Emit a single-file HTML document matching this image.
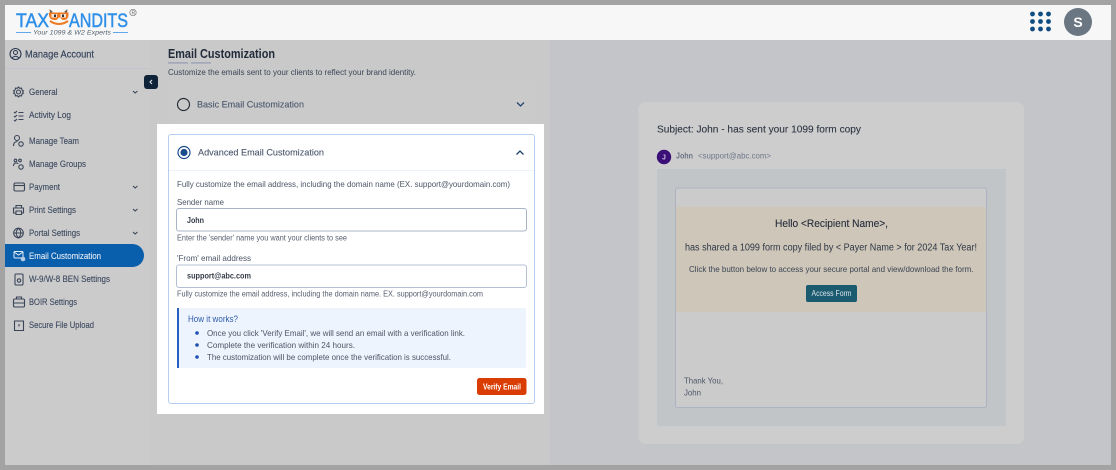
<!DOCTYPE html>
<html lang="en"><head><meta charset="utf-8"><title>Email Customization</title>
<style>
html,body{margin:0;padding:0;width:1116px;height:470px;overflow:hidden;background:#a3a3a3}
svg{display:block;filter:blur(0.35px)}
text{font-family:"Liberation Sans",sans-serif;white-space:pre}
.s{font-size:9px;fill:#3d4a5f;stroke:#3d4a5f;stroke-width:.12}
.g{font-size:7.8px;fill:#565f70}
.d{font-size:8.400px;fill:#4d5666}
.ic{fill:none;stroke:#3a4658;stroke-width:1.100}
</style></head><body>
<svg width="1116" height="470" viewBox="0 0 1116 470" xmlns="http://www.w3.org/2000/svg">
<rect width="1116" height="470" fill="#a3a3a3"/>
<rect x="5" y="5" width="1106" height="35" fill="#f7f7f7"/>
<rect x="5" y="40" width="145" height="425" fill="#cbcbcb"/>
<rect x="150" y="40" width="400" height="425" fill="#c9c9c9"/>
<rect x="550" y="40" width="561" height="425" fill="#c4c5c9"/>

<!-- logo -->
<text x="16" y="27" font-size="19" fill="#2f8fe8" stroke="#2f8fe8" stroke-width=".5" textLength="33" lengthAdjust="spacingAndGlyphs">TAX</text>
<text x="69" y="27" font-size="19" fill="#2f8fe8" stroke="#2f8fe8" stroke-width=".5" textLength="59" lengthAdjust="spacingAndGlyphs">ANDITS</text>
<path d="M50 13l-.5-4 3.500 3zM67 13l.5-4-3.500 3z" fill="#6d6258"/>
<path d="M49 12.500h19.500v2.500c0 3-2 5-4.500 5h-1.500l-2.500-2.500h-1l-2.500 2.500h-2c-3 0-5.500-2-5.500-5z" fill="#ee7a22"/>
<rect x="51.500" y="14" width="5.500" height="3.500" fill="#f6e8dc"/><rect x="60.500" y="14" width="5.500" height="3.500" fill="#f6e8dc"/>
<rect x="54" y="14.500" width="2" height="2.500" fill="#333"/><rect x="62" y="14.500" width="2" height="2.500" fill="#333"/>
<path d="M50 21q9 6 18 0" fill="none" stroke="#ee7a22" stroke-width="2"/>
<circle cx="133" cy="12.500" r="3.200" fill="none" stroke="#777" stroke-width=".7"/>
<text x="131.500" y="14.500" font-size="5" fill="#666">R</text>
<path d="M16 32.500h15M113 32.500h15" stroke="#2f8fe8" stroke-width=".8"/>
<text x="33" y="34.500" font-size="6.500" font-style="italic" fill="#56606f" textLength="78" lengthAdjust="spacingAndGlyphs">Your 1099 &amp; W2 Experts</text>

<!-- top right -->
<g fill="#0f4c81">
<circle cx="1032.500" cy="14" r="2.400"/><circle cx="1040.500" cy="14" r="2.400"/><circle cx="1048.500" cy="14" r="2.400"/>
<circle cx="1032.500" cy="21.500" r="2.400"/><circle cx="1040.500" cy="21.500" r="2.400"/><circle cx="1048.500" cy="21.500" r="2.400"/>
<circle cx="1032.500" cy="29" r="2.400"/><circle cx="1040.500" cy="29" r="2.400"/><circle cx="1048.500" cy="29" r="2.400"/>
</g>
<circle cx="1078" cy="22" r="14" fill="#6b7683"/>
<text x="1078" y="27" font-size="14" font-weight="bold" fill="#fff" text-anchor="middle">S</text>

<!-- sidebar -->
<circle cx="15.500" cy="54" r="5.500" fill="none" stroke="#2b3a52" stroke-width="1.100"/>
<circle cx="15.500" cy="52.500" r="2" fill="none" stroke="#2b3a52"/>
<path d="M12 58q3.500-3.500 7 0" fill="none" stroke="#2b3a52"/>
<text x="25" y="57.500" font-size="10" fill="#33415a" stroke="#33415a" stroke-width=".15" textLength="69" lengthAdjust="spacingAndGlyphs">Manage Account</text>
<rect x="5" y="68" width="145" height="1" fill="#c1c5cc"/>

<path d="M5 244H132.500a11.500 11.500 0 0 1 0 23H5z" fill="#0a5fad"/>

<text class="s" x="29" y="95" textLength="28.500" lengthAdjust="spacingAndGlyphs">General</text>
<text class="s" x="29" y="118" textLength="42" lengthAdjust="spacingAndGlyphs">Activity Log</text>
<text class="s" x="29" y="144" textLength="50" lengthAdjust="spacingAndGlyphs">Manage Team</text>
<text class="s" x="29" y="167" textLength="57" lengthAdjust="spacingAndGlyphs">Manage Groups</text>
<text class="s" x="29" y="190" textLength="31" lengthAdjust="spacingAndGlyphs">Payment</text>
<text class="s" x="29" y="213" textLength="47" lengthAdjust="spacingAndGlyphs">Print Settings</text>
<text class="s" x="29" y="236" textLength="51" lengthAdjust="spacingAndGlyphs">Portal Settings</text>
<text x="29" y="259" font-size="9" fill="#e3ebf5" stroke="#e3ebf5" stroke-width=".12" textLength="72" lengthAdjust="spacingAndGlyphs">Email Customization</text>
<text class="s" x="29" y="282" textLength="81" lengthAdjust="spacingAndGlyphs">W-9/W-8 BEN Settings</text>
<text class="s" x="29" y="305" textLength="48" lengthAdjust="spacingAndGlyphs">BOIR Settings</text>
<text class="s" x="29" y="328" textLength="65" lengthAdjust="spacingAndGlyphs">Secure File Upload</text>

<!-- sidebar icons -->
<g class="ic">
<circle cx="18.500" cy="92" r="2"/><path d="M18.500 87l1.200 1.300 1.800-.2.400 1.800 1.500 1-.8 1.100.8 1.200-1.500 1-.4 1.700-1.800-.2-1.200 1.300-1.200-1.300-1.800.2-.4-1.700-1.500-1 .8-1.200-.8-1.100 1.500-1 .4-1.800 1.800.2z"/>
<path d="M14 112l1 1 2-2M14 116l1 1 2-2M14 120l1 1 2-2M18.500 112.500h5M18.500 116h5M18.500 119.500h5"/>
<circle cx="17" cy="138" r="2.500"/><path d="M13.500 146c0-3 1.500-4.500 4-4.500"/><circle cx="21" cy="144" r="2.200"/>
<circle cx="15.500" cy="160.500" r="1.300"/><circle cx="20" cy="160.500" r="1.300"/><path d="M13.500 166c0-2 1-3 2.500-3s2 .5 2 1"/><circle cx="21" cy="167" r="2.200"/>
<rect x="14" y="183" width="10.500" height="8" rx="1.500"/><path d="M14 185.500h10.500"/>
<path d="M16 208v-2.500h5.500v2.500M16 213h-2.500v-5h10v5h-2M16 211h5.500v3.500h-5.500z"/>
<circle cx="18.500" cy="233" r="4.800"/><path d="M13.700 233h9.600M18.500 228.200c-3 3-3 6.600 0 9.600c3-3 3-6.600 0-9.600"/>
<rect x="15" y="274" width="8" height="11" rx="1"/><circle cx="19" cy="280.500" r="1.700"/>
<rect x="13.500" y="299" width="11" height="8" rx="1.200"/><path d="M16.500 299v-2h5v2M13.500 303h11"/>
<path d="M14.500 321h9v9.500h-9zM19 324v2.500"/>
</g>
<g fill="none" stroke="#e3ebf5" stroke-width="1"><rect x="14" y="251.500" width="9" height="6.500" rx="1"/><path d="M14 252l4.500 3 4.500-3"/></g>
<circle cx="23" cy="259" r="2.300" fill="#b9cde4"/>
<g fill="none" stroke="#3a4658" stroke-width="1.100">
<path d="M133 91l2.200 2 2.200-2M133 186l2.200 2 2.200-2M133 209l2.200 2 2.200-2M133 232l2.200 2 2.200-2"/>
</g>

<!-- main header -->
<text x="168" y="58" font-size="12.500" font-weight="bold" fill="#222b39" textLength="107" lengthAdjust="spacingAndGlyphs">Email Customization</text>
<rect x="168" y="62" width="20" height="1.700" fill="#a2a9b9"/><rect x="191" y="62" width="20" height="1.700" fill="#a2a9b9"/>
<text x="168" y="75" font-size="8.400" fill="#3b4555" textLength="248" lengthAdjust="spacingAndGlyphs">Customize the emails sent to your clients to reflect your brand identity.</text>

<!-- basic panel -->
<rect x="168" y="87" width="367" height="36" rx="2" fill="#cacaca"/>
<circle cx="183.500" cy="104.500" r="6" fill="none" stroke="#2a2f38" stroke-width="1.200"/>
<text x="197" y="107.500" font-size="9.500" fill="#4a566b" stroke="#4a566b" stroke-width=".1" textLength="107" lengthAdjust="spacingAndGlyphs">Basic Email Customization</text>
<path d="M517 102.500l3.500 3.500 3.500-3.500" fill="none" stroke="#25456f" stroke-width="1.300"/>

<!-- white zone -->
<rect x="157" y="124" width="387" height="290" fill="#fff"/>
<rect x="168.500" y="134.500" width="366" height="269" rx="2.500" fill="#fff" stroke="#b5cef0"/>
<rect x="169" y="170" width="365" height="1" fill="#edf3fb"/>
<circle cx="184" cy="152.500" r="6" fill="none" stroke="#1a4c8c" stroke-width="1.200"/>
<circle cx="184" cy="152.500" r="3.600" fill="#1a4c8c"/>
<text x="198" y="155.500" font-size="9.500" fill="#4a566b" stroke="#4a566b" stroke-width=".1" textLength="126" lengthAdjust="spacingAndGlyphs">Advanced Email Customization</text>
<path d="M516.500 154.500l3.500-3.500 3.500 3.500" fill="none" stroke="#1f3f6d" stroke-width="1.300"/>

<text class="d" x="177" y="187" textLength="333" lengthAdjust="spacingAndGlyphs">Fully customize the email address, including the domain name (EX. support@yourdomain.com)</text>
<text class="d" x="177" y="205" textLength="47" lengthAdjust="spacingAndGlyphs">Sender name</text>
<rect x="176.500" y="208.500" width="350" height="22.500" rx="2.500" fill="#fff" stroke="#a9b3c6" stroke-width="1"/>
<text x="187" y="223" font-size="8.400" font-weight="bold" fill="#333a47" textLength="17" lengthAdjust="spacingAndGlyphs">John</text>
<text class="g" x="177" y="240.500" textLength="170" lengthAdjust="spacingAndGlyphs">Enter the 'sender' name you want your clients to see</text>
<text class="d" x="177" y="261" textLength="74" lengthAdjust="spacingAndGlyphs">'From' email address</text>
<rect x="176.500" y="265" width="350" height="22.500" rx="2.500" fill="#fff" stroke="#b4bfd4" stroke-width="1"/>
<text x="187" y="278.500" font-size="8.400" font-weight="bold" fill="#333a47" textLength="64" lengthAdjust="spacingAndGlyphs">support@abc.com</text>
<text class="g" x="177" y="296.500" textLength="306" lengthAdjust="spacingAndGlyphs">Fully customize the email address, including the domain name. EX. support@yourdomain.com</text>

<rect x="177" y="308" width="349" height="60" rx="2" fill="#eef4fd"/>
<rect x="177" y="308" width="2" height="60" fill="#2a5fc0"/>
<text x="188" y="322" font-size="8.800" fill="#2f5cab" textLength="50" lengthAdjust="spacingAndGlyphs">How it works?</text>
<circle cx="197" cy="333" r="1.800" fill="#1f4fae"/><circle cx="197" cy="345" r="1.800" fill="#1f4fae"/><circle cx="197" cy="357" r="1.800" fill="#1f4fae"/>
<text class="d" x="207" y="336" textLength="258" lengthAdjust="spacingAndGlyphs">Once you click 'Verify Email', we will send an email with a verification link.</text>
<text class="d" x="207" y="348" textLength="148" lengthAdjust="spacingAndGlyphs">Complete the verification within 24 hours.</text>
<text class="d" x="207" y="360" textLength="244" lengthAdjust="spacingAndGlyphs">The customization will be complete once the verification is successful.</text>

<rect x="477" y="378" width="49.500" height="17" rx="2.500" fill="#d93d04"/>
<text x="483" y="389.500" font-size="8.400" font-weight="bold" fill="#fff" textLength="38" lengthAdjust="spacingAndGlyphs">Verify Email</text>

<!-- collapse -->
<rect x="144" y="75" width="14" height="14" rx="3" fill="#0f2438"/>
<path d="M152 80l-2 2 2 2" fill="none" stroke="#dfe6ee" stroke-width="1.100"/>

<!-- right preview -->
<rect x="638.500" y="102" width="385.500" height="342" rx="7" fill="#cdcdcd"/>
<text x="657" y="132.500" font-size="10.500" fill="#2d3542" stroke="#2d3542" stroke-width=".1" textLength="204" lengthAdjust="spacingAndGlyphs">Subject: John - has sent your 1099 form copy</text>
<circle cx="664" cy="157" r="7.200" fill="#3a0f78"/>
<text x="664" y="159.500" font-size="7" font-weight="bold" fill="#cbbfe0" text-anchor="middle">J</text>
<text x="676" y="158.500" font-size="8" font-weight="bold" fill="#6a7382" textLength="17" lengthAdjust="spacingAndGlyphs">John</text>
<text x="698" y="158.500" font-size="8" fill="#6f7889" textLength="73" lengthAdjust="spacingAndGlyphs">&lt;support@abc.com&gt;</text>

<rect x="657" y="169" width="349" height="257" fill="#c1c5c8"/>
<rect x="675.500" y="188" width="311" height="219.500" rx="2" fill="#cbcbcb" stroke="#aeb3c2"/>
<rect x="676" y="207" width="310" height="105" fill="#cdc6b9"/>
<text x="775" y="227" font-size="11" fill="#252c3a" stroke="#252c3a" stroke-width=".1" textLength="113" lengthAdjust="spacingAndGlyphs">Hello &lt;Recipient Name&gt;,</text>
<text x="685" y="250.500" font-size="10" fill="#2f3745" textLength="292" lengthAdjust="spacingAndGlyphs">has shared a 1099 form copy filed by &lt; Payer Name &gt; for 2024 Tax Year!</text>
<text x="689" y="272" font-size="8.400" fill="#3d4553" textLength="284.500" lengthAdjust="spacingAndGlyphs">Click the button below to access your secure portal and view/download the form.</text>
<rect x="806" y="285" width="51" height="17" rx="2" fill="#1a5b70"/>
<text x="811.500" y="296" font-size="8" fill="#dfe6e9" textLength="40" lengthAdjust="spacingAndGlyphs">Access Form</text>
<text x="684" y="383.500" font-size="8.400" fill="#4d5666" textLength="39" lengthAdjust="spacingAndGlyphs">Thank You,</text>
<text x="684" y="395.500" font-size="8.400" fill="#4d5666" textLength="17" lengthAdjust="spacingAndGlyphs">John</text>
</svg>
</body></html>
